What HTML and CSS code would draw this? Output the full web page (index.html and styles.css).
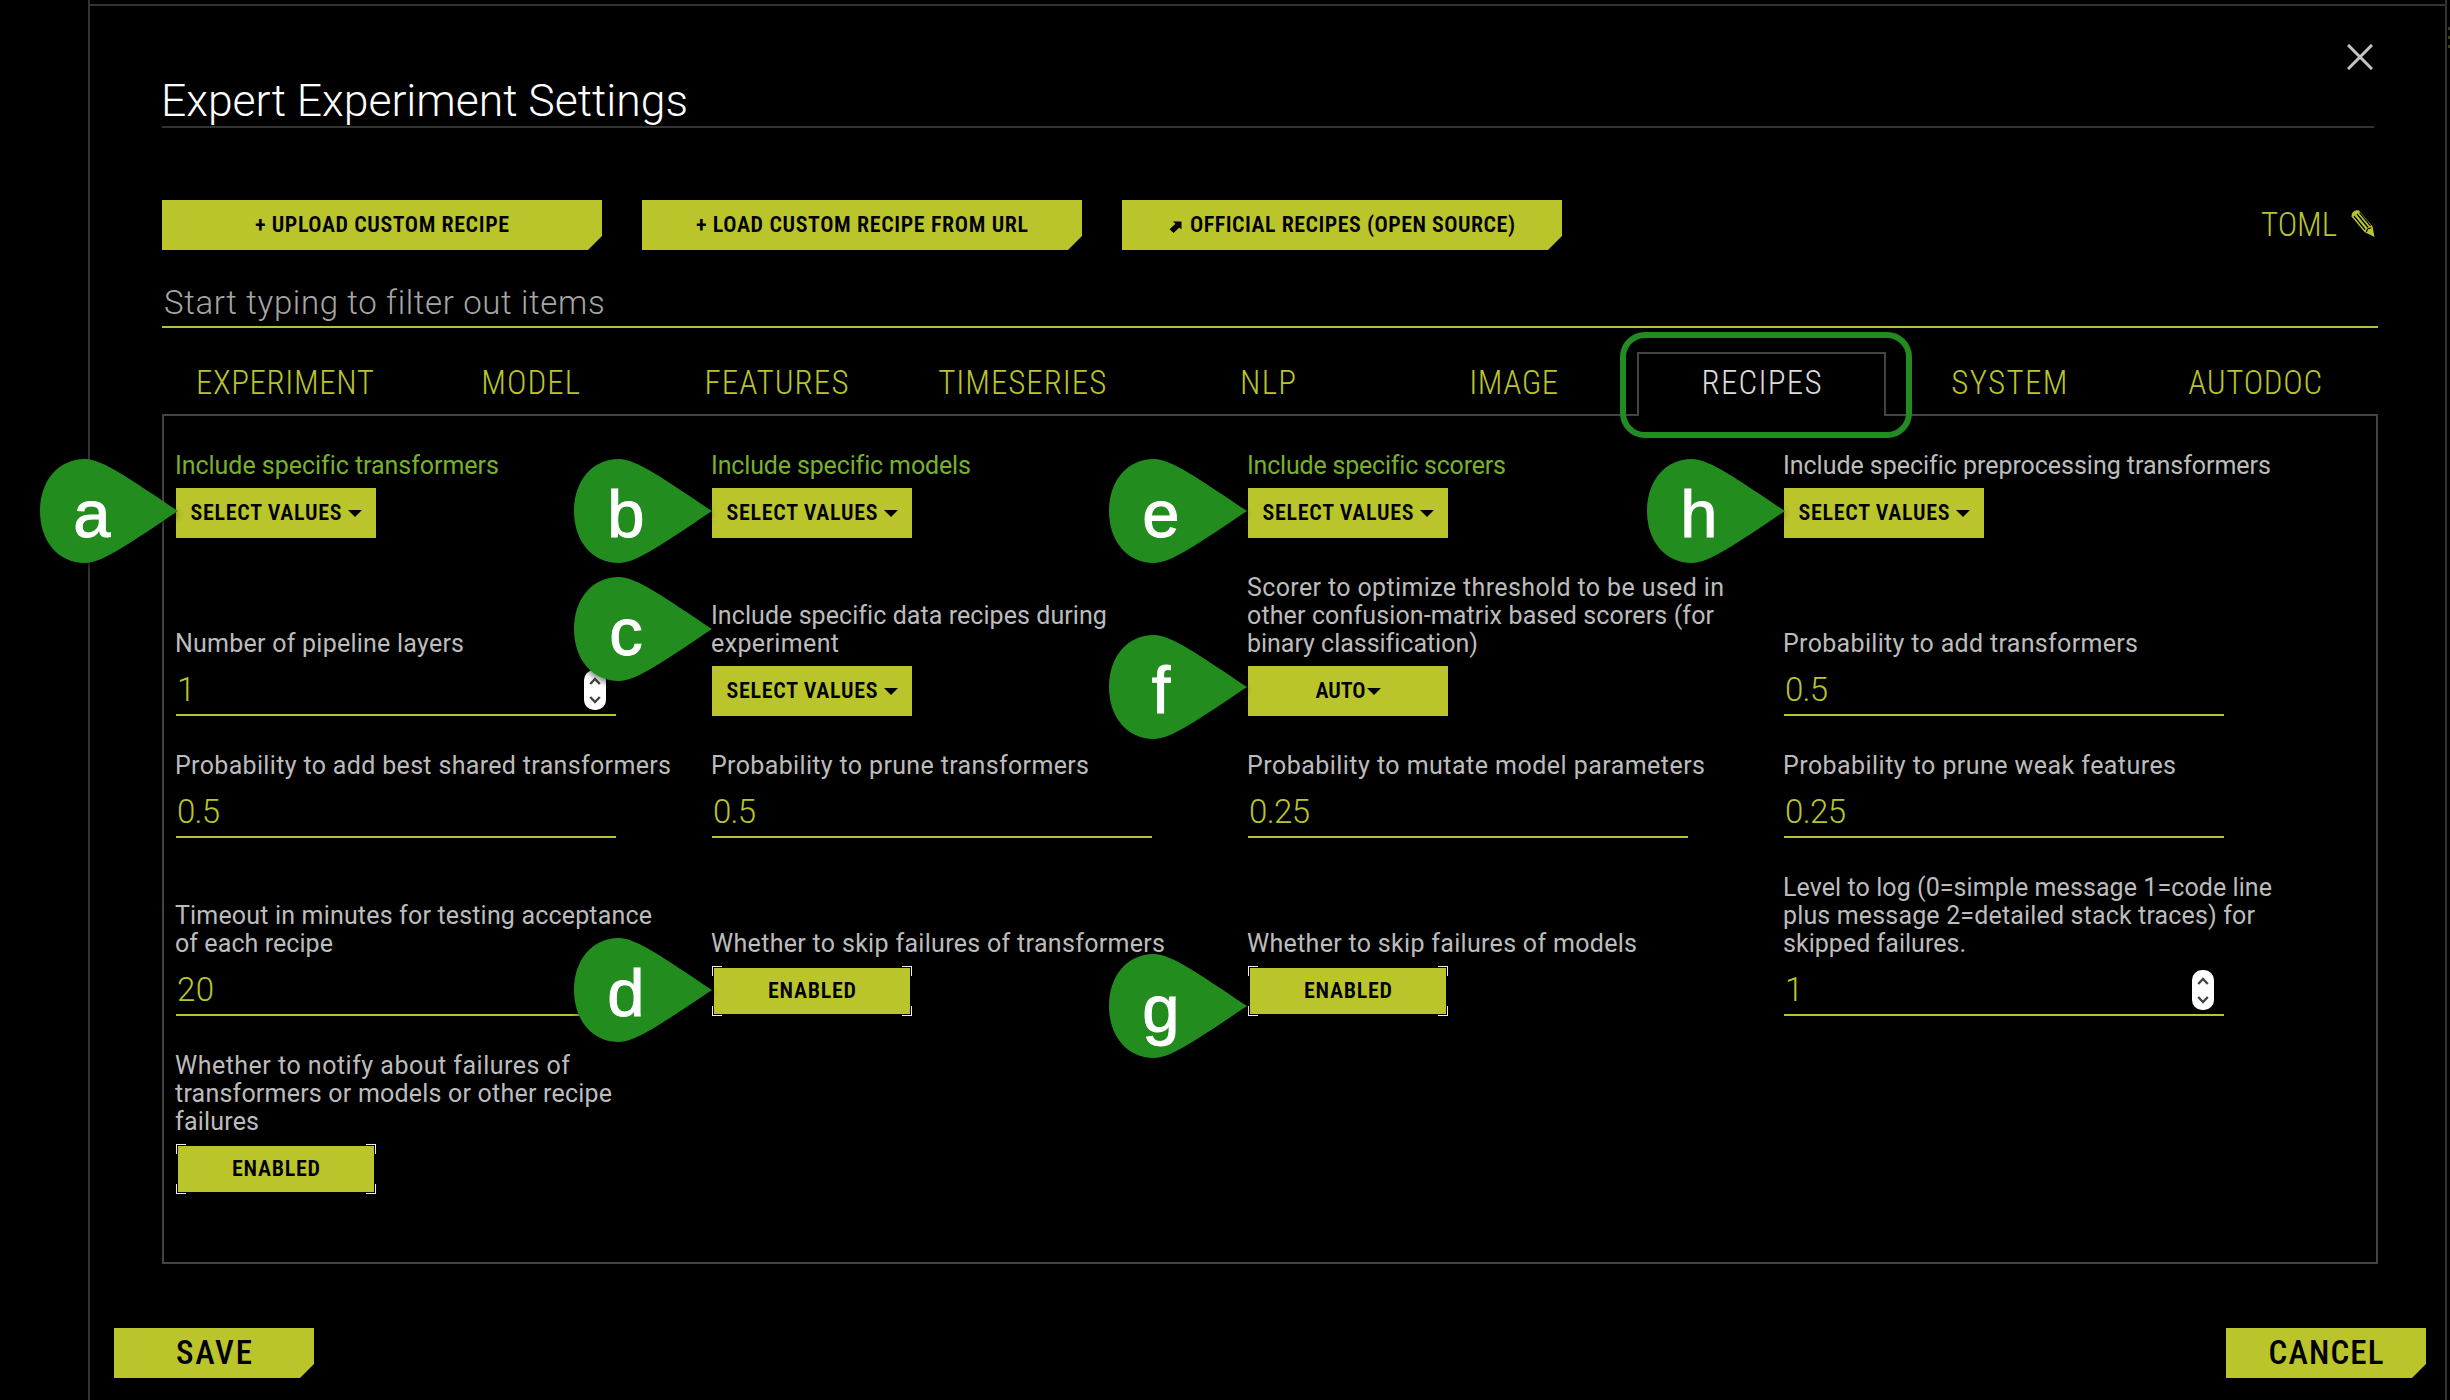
FILE: index.html
```html
<!DOCTYPE html>
<html lang="en">
<head>
<meta charset="utf-8">
<title>Expert Experiment Settings</title>
<link rel="stylesheet" href="styles.css">
</head>
<body>
<svg class="defs" width="0" height="0" aria-hidden="true">
  <symbol id="drop" viewBox="0 0 138 104"><path d="M138 52C90 20 62 0 45 0C18 0 0 22 0 52C0 82 18 104 45 104C62 104 90 84 138 52Z"/></symbol>
  <symbol id="spin" viewBox="0 0 22 40"><rect width="22" height="40" rx="10" fill="#fff"/><path d="M6.200 14L11 9l4.800 5M6.200 27L11 32l4.800-5" fill="none" stroke="#444" stroke-width="2.400"/></symbol>
</svg>
<div class="menu"><i></i><i></i><i></i></div>
<main class="dialog">
  <header class="head">
    <h1><span data-w="527">Expert Experiment Settings</span></h1>
    <svg class="close" viewBox="0 0 26 26"><path d="M1 1L25 25M25 1L1 25"/></svg>
  </header>

  <div class="actions">
    <button class="btn cut wide"><span data-w="254">+ UPLOAD CUSTOM RECIPE</span></button>
    <button class="btn cut wide"><span data-w="332">+ LOAD CUSTOM RECIPE FROM URL</span></button>
    <button class="btn cut wide"><svg class="ext" viewBox="0 0 14 13"><path d="M4 0.500H13.500V9L11 7L5 13L0.500 9L7 3Z"/></svg><span data-w="325">OFFICIAL RECIPES (OPEN SOURCE)</span></button>
    <a class="toml"><span data-w="76">TOML</span>
      <svg class="pencil" viewBox="0 0 26 29"><path d="M1.500 7.500C1.500 3 5 0.800 9 1.500L22.500 17.500L24.500 28L14.500 23Z" fill="#bac42d"/><path d="M4 7L15 20.500M7 5L18 18.500M9.600 3.600L20.500 16.800M16.500 23c0-2.500 1.800-4 4.800-4" fill="none" stroke="#000" stroke-width="1.200"/></svg>
    </a>
  </div>

  <div class="filter"><span data-w="440">Start typing to filter out items</span></div>

  <nav class="tabs">
    <a><span data-w="178">EXPERIMENT</span></a>
    <a><span data-w="99">MODEL</span></a>
    <a><span data-w="144">FEATURES</span></a>
    <a><span data-w="168">TIMESERIES</span></a>
    <a><span data-w="56">NLP</span></a>
    <a><span data-w="89">IMAGE</span></a>
    <a class="on"><span data-w="120">RECIPES</span></a>
    <a><span data-w="116">SYSTEM</span></a>
    <a><span data-w="134">AUTODOC</span></a>
  </nav>

  <section class="panel">
    <div class="field"><label class="set"><span data-w="323">Include specific transformers</span></label>
      <button class="btn"><span data-w="151">SELECT VALUES</span><i class="caret"></i></button></div>
    <div class="field"><label class="set"><span data-w="259">Include specific models</span></label>
      <button class="btn"><span data-w="151">SELECT VALUES</span><i class="caret"></i></button></div>
    <div class="field"><label class="set"><span data-w="258">Include specific scorers</span></label>
      <button class="btn"><span data-w="151">SELECT VALUES</span><i class="caret"></i></button></div>
    <div class="field"><label><span data-w="487">Include specific preprocessing transformers</span></label>
      <button class="btn"><span data-w="151">SELECT VALUES</span><i class="caret"></i></button></div>

    <div class="field"><label><span data-w="289">Number of pipeline layers</span></label>
      <div class="input"><span>1</span><svg class="spin"><use href="#spin"/></svg></div></div>
    <div class="field"><label><span data-w="395">Include specific data recipes during</span><span data-w="128">experiment</span></label>
      <button class="btn"><span data-w="151">SELECT VALUES</span><i class="caret"></i></button></div>
    <div class="field"><label><span data-w="477">Scorer to optimize threshold to be used in</span><span data-w="467">other confusion-matrix based scorers (for</span><span data-w="230">binary classification)</span></label>
      <button class="btn tight"><span data-w="50">AUTO</span><i class="caret"></i></button></div>
    <div class="field"><label><span data-w="355">Probability to add transformers</span></label>
      <div class="input"><span data-w="43">0.5</span></div></div>

    <div class="field"><label><span data-w="496">Probability to add best shared transformers</span></label>
      <div class="input"><span data-w="43">0.5</span></div></div>
    <div class="field"><label><span data-w="378">Probability to prune transformers</span></label>
      <div class="input"><span data-w="43">0.5</span></div></div>
    <div class="field"><label><span data-w="458">Probability to mutate model parameters</span></label>
      <div class="input"><span data-w="61">0.25</span></div></div>
    <div class="field"><label><span data-w="393">Probability to prune weak features</span></label>
      <div class="input"><span data-w="61">0.25</span></div></div>

    <div class="field"><label><span data-w="477">Timeout in minutes for testing acceptance</span><span data-w="158">of each recipe</span></label>
      <div class="input"><span data-w="37">20</span></div></div>
    <div class="field"><label><span data-w="454">Whether to skip failures of transformers</span></label>
      <button class="btn toggle"><span data-w="88">ENABLED</span></button></div>
    <div class="field"><label><span data-w="390">Whether to skip failures of models</span></label>
      <button class="btn toggle"><span data-w="88">ENABLED</span></button></div>
    <div class="field"><label><span data-w="489">Level to log (0=simple message 1=code line</span><span data-w="472">plus message 2=detailed stack traces) for</span><span data-w="183">skipped failures.</span></label>
      <div class="input"><span>1</span><svg class="spin"><use href="#spin"/></svg></div></div>

    <div class="field"><label><span data-w="395">Whether to notify about failures of</span><span data-w="437">transformers or models or other recipe</span><span data-w="84">failures</span></label>
      <button class="btn toggle"><span data-w="88">ENABLED</span></button></div>
  </section>

  <footer class="foot">
    <button class="btn cut big"><span data-w="76">SAVE</span></button>
    <button class="btn cut big"><span data-w="115">CANCEL</span></button>
  </footer>
</main>

<div class="ring"></div>
<div class="mark a"><svg><use href="#drop"/></svg><b>a</b></div>
<div class="mark b"><svg><use href="#drop"/></svg><b>b</b></div>
<div class="mark c"><svg><use href="#drop"/></svg><b>c</b></div>
<div class="mark d"><svg><use href="#drop"/></svg><b>d</b></div>
<div class="mark e"><svg><use href="#drop"/></svg><b>e</b></div>
<div class="mark f"><svg><use href="#drop"/></svg><b>f</b></div>
<div class="mark g"><svg><use href="#drop"/></svg><b>g</b></div>
<div class="mark h"><svg><use href="#drop"/></svg><b>h</b></div>
<script src="track.js"></script>
</body>
</html>
```
FILE: styles.css
```css
* { box-sizing: border-box; }
body {
  margin: 0; height: 1400px; overflow: hidden; position: relative;
  background: #000; color: #bcbcbc;
  font: 300 25px/28px Roboto, "Liberation Sans", sans-serif;
}
.defs { position: absolute; }

.menu { position: absolute; left: 2448px; top: 27px; display: grid; gap: 6px; }
.menu i { width: 2px; height: 3px; background: #3d4012; }

.dialog {
  margin-left: 88px; width: 2359px; height: 1400px; padding: 4px 0 0;
  display: flex; flex-direction: column;
  background: linear-gradient(#333, #333) 0 4px / 100% 2px no-repeat, #000;
  border: solid #333; border-width: 0 2px;
}
.head {
  height: 124px; margin: 0 71px 0 72px;
  display: flex; justify-content: space-between;
  border-bottom: 2px solid #333;
}
h1 { margin: 69px 0 0 -1px; font-size: 44.500px; line-height: 56px; font-weight: 350; color: #fff; }
.close { width: 26px; height: 26px; margin: 40px 1px 0 0; stroke: #c5c5c5; stroke-width: 3; }

span { white-space: nowrap; }

.actions { display: flex; gap: 40px; align-items: center; margin: 72px 68px 0 72px; height: 50px; }
.btn {
  position: relative; border: 0; padding: 0; width: 200px; height: 50px; background: #bac42b; color: #000;
  font: 600 22px/50px "Roboto Condensed", Roboto, sans-serif;
  display: flex; justify-content: center; align-items: center; gap: 6px;
}
.wide { width: 440px; }
.cut { clip-path: polygon(0 0, 100% 0, 100% 36px, calc(100% - 14px) 100%, 0 100%); }
.big { font-size: 33px; font-weight: 550; }
.tight { gap: 1px; }
.caret { border: solid transparent; border-width: 7px 7px 0; border-top-color: #000; margin-top: 1px; }
.ext { width: 13px; height: 12px; margin: 3px 2px 0 0; }

.toml { margin-left: auto; display: flex; align-items: center; gap: 13px; color: #bac42d;
  font: 350 33px/50px "Roboto Condensed", Roboto, sans-serif; }
.pencil { width: 26px; height: 29px; margin: -4px 1px 0 0; }

.filter {
  height: 78px; margin: 0 67px 0 72px; padding: 35px 3px 0 2px;
  border-bottom: 2px solid #b5bf38; color: #a6a6a6;
  font-size: 33px; line-height: 36px; font-weight: 350;
}

.tabs { display: flex; height: 88px; margin: 0 67px 0 72px; padding-top: 24px;
  font: 350 33px/62px "Roboto Condensed", Roboto, sans-serif; color: #bac42d; }
.tabs a { flex: 1; text-align: center; }
.tabs .on { color: #dcdcdc; background: #000; border: 2px solid #444; border-bottom: 0; line-height: 58px; position: relative; }

.panel {
  height: 850px; margin: -2px 67px 0 72px; padding: 36px 12px 0;
  border: 2px solid #444;
  display: grid; grid-template-columns: repeat(4, 536px); align-content: start; row-gap: 36px;
}
.field { display: flex; flex-direction: column; justify-content: flex-end; gap: 8px; }
label { display: flex; flex-direction: column; align-items: flex-start; font-weight: 400; margin-left: -1px; }
.set { color: #78b02c; }
.input {
  width: 440px; height: 50px; padding: 0 10px 0 1px; color: #bac42d;
  border-bottom: 2px solid #bac42d; display: flex; justify-content: space-between; align-items: center;
  font: 350 33px/46px Roboto, sans-serif;
}
.spin { width: 22px; height: 40px; }
.toggle { background: #bac42b; background-clip: padding-box; border: 2px solid transparent; }
.toggle::before {
  content: ""; position: absolute; inset: -2px; border: 1px solid #eee;
  clip-path: polygon(0 0, 10px 0, 10px 2px, 190px 2px, 190px 0, 100% 0, 100% 10px, 198px 10px, 198px 40px, 100% 40px, 100% 100%, 190px 100%, 190px 48px, 10px 48px, 10px 100%, 0 100%, 0 40px, 2px 40px, 2px 10px, 0 10px);
}

.foot { display: flex; justify-content: space-between; margin: 64px 19px 0 24px; }

.ring { position: absolute; left: 1620px; top: 332px; width: 292px; height: 106px; border: 6px solid #228b22; border-radius: 25px; }
.mark { position: absolute; width: 138px; height: 104px; }
.mark svg { position: absolute; width: 138px; height: 104px; fill: #228c1f; overflow: visible; filter: drop-shadow(0 3px 3px rgba(0, 0, 0, .5)); }
.mark b { position: absolute; left: 0; top: 17px; width: 104px; text-align: center; font: 400 67px/76px "Liberation Sans", sans-serif; color: #fff; -webkit-text-stroke: 1px #fff; }
.a { left: 40px; top: 459px; }
.b { left: 574px; top: 459px; }
.c { left: 574px; top: 577px; }
.d { left: 574px; top: 938px; }
.e { left: 1109px; top: 459px; }
.f { left: 1109px; top: 635px; }
.g { left: 1109px; top: 954px; }
.h { left: 1647px; top: 459px; }
```
FILE: track.js
```js
// Letter-space each line so that it fills its design width.
for (const el of document.querySelectorAll('[data-w]')) {
  const gaps = el.textContent.length - 1;
  const diff = +el.dataset.w - el.getBoundingClientRect().width;
  const step = diff / gaps;
  el.style.letterSpacing = step + 'px';
  el.style.marginRight = -step + 'px';
}
```
